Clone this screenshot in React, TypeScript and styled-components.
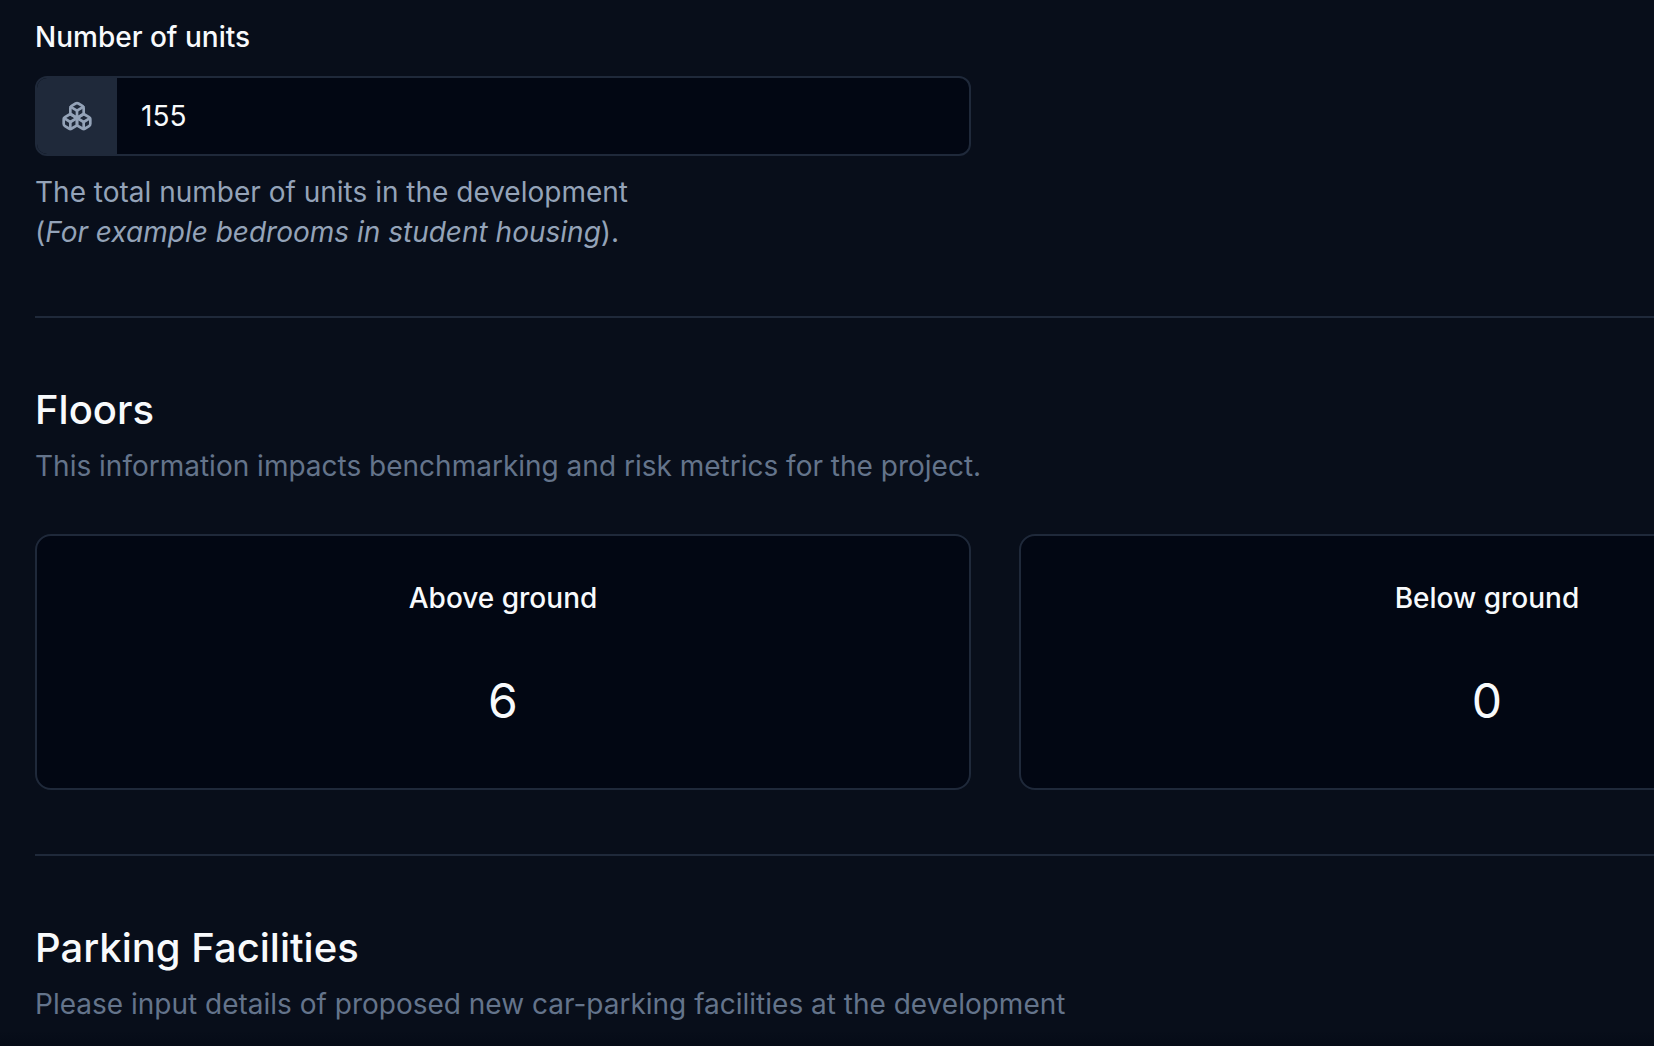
import React, { useState } from "react";
import styled, { createGlobalStyle } from "styled-components";
import { Boxes } from "lucide-react";

const GlobalStyle = createGlobalStyle`
  *, *::before, *::after { box-sizing: border-box; }
  body {
    margin: 0;
    background: #080e1a;
    color: #f8fafc;
    font-family: Inter, "Liberation Sans", sans-serif;
    font-size: 28px;
    line-height: 40px;
    -webkit-font-smoothing: antialiased;
  }
`;

const Viewport = styled.main`
  position: relative;
  height: 100vh;
  overflow: hidden;
  padding: 17px 35px 0;

  &::after {
    content: "";
    position: absolute;
    inset: auto 0 0;
    height: 16px;
    background: linear-gradient(transparent, #02071366);
    pointer-events: none;
  }
`;

const Form = styled.form`
  min-width: 1920px;
`;

const Columns = styled.div`
  display: grid;
  grid-template-columns: repeat(2, 1fr);
  gap: 48px;
`;

const Field = styled.div`
  display: flex;
  flex-direction: column;
`;

const Label = styled.label`
  font-weight: 500;
`;

const InputGroup = styled.div`
  display: flex;
  height: 80px;
  margin: 19px 0 16px;
  overflow: hidden;
  border: 2px solid #1f293a;
  border-radius: 12px;
  background: #020713;
`;

const Addon = styled.span`
  display: flex;
  align-items: center;
  padding: 0 24px;
  background: #1f293a;
  color: #94a3b8;
`;

const Input = styled.input`
  flex: 1;
  min-width: 0;
  padding: 0 24px;
  border: 0;
  outline: 0;
  background: transparent;
  color: inherit;
  font: inherit;
`;

const Help = styled.p`
  margin: 0;
  color: #94a3b8;
`;

const Divider = styled.hr`
  height: 2px;
  margin: 64px 0;
  border: 0;
  background: #1f293a;
`;

const Title = styled.h2`
  margin: 0;
  font-size: 40px;
  line-height: 56px;
  font-weight: 500;
`;

const Description = styled.p`
  margin: 8px 0 48px;
  color: #64748b;
`;

const Card = styled.section`
  display: flex;
  flex-direction: column;
  align-items: center;
  gap: 51px;
  padding: 42px 48px 55px;
  border: 2px solid #1f293a;
  border-radius: 16px;
  background: #020713;
`;

const CardTitle = styled.h3`
  margin: 0;
  font-size: 28px;
  font-weight: 500;
`;

const Count = styled.output`
  font-size: 48px;
  line-height: 64px;
  font-weight: 400;
`;

const floors = [
  { name: "Above ground", count: 6 },
  { name: "Below ground", count: 0 },
];

export default function App() {
  const [units, setUnits] = useState("155");

  return (
    <>
      <GlobalStyle />
      <Viewport>
        <Form>
          <Columns>
            <Field>
              <Label htmlFor="units">Number of units</Label>
              <InputGroup>
                <Addon>
                  <Boxes size={32} aria-hidden="true" />
                </Addon>
                <Input
                  id="units"
                  inputMode="numeric"
                  aria-describedby="units-help"
                  value={units}
                  onChange={(event) => setUnits(event.target.value)}
                />
              </InputGroup>
              <Help id="units-help">
                The total number of units in the development
                <br />(<em>For example bedrooms in student housing</em>).
              </Help>
            </Field>
          </Columns>
          <Divider />
          <Title>Floors</Title>
          <Description>
            This information impacts benchmarking and risk metrics for the project.
          </Description>
          <Columns>
            {floors.map((floor) => (
              <Card key={floor.name}>
                <CardTitle>{floor.name}</CardTitle>
                <Count aria-label={floor.name}>{floor.count}</Count>
              </Card>
            ))}
          </Columns>
          <Divider />
          <Title>Parking Facilities</Title>
          <Description>
            Please input details of proposed new car-parking facilities at the development
          </Description>
        </Form>
      </Viewport>
    </>
  );
}
